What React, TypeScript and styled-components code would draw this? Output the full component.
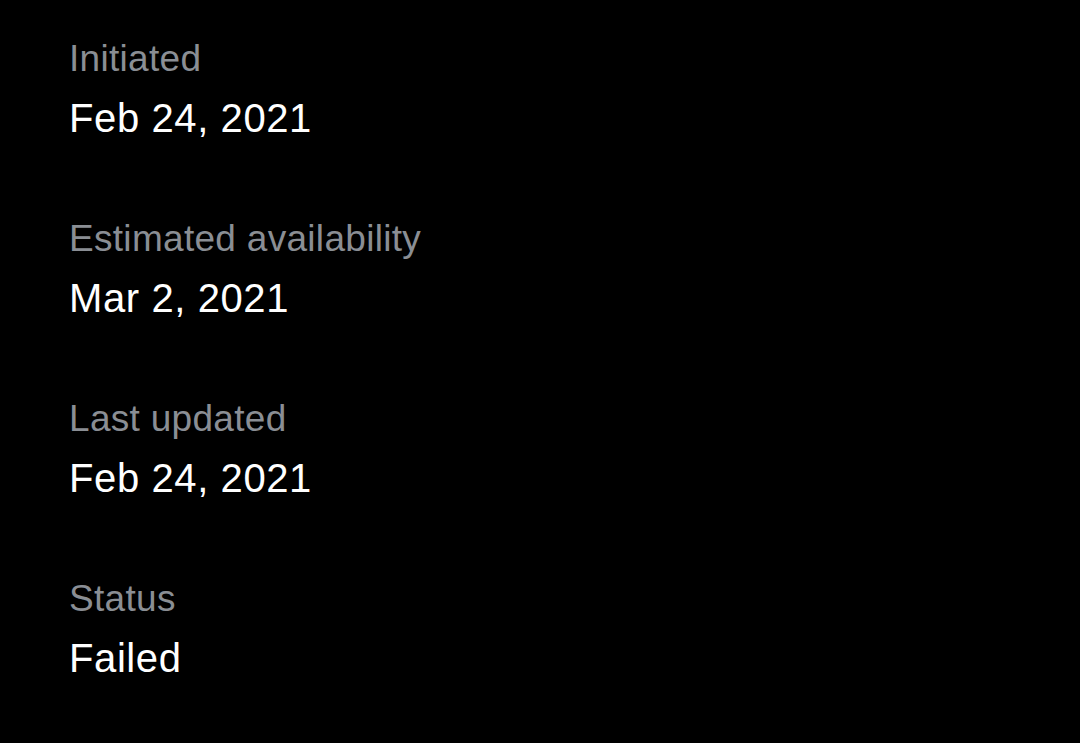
import React from "react";
import styled, { createGlobalStyle } from "styled-components";

const Global = createGlobalStyle`
  html, body { margin: 0; padding: 0; background: #000; }
  body { font-family: "Liberation Sans", Arial, sans-serif; }
`;

const Page = styled.div`
  min-height: 743px;
  background: #000;
  padding: 37px 0 0 69px;
  box-sizing: border-box;
  display: flex;
  flex-direction: column;
  gap: 76px;
`;

const Field = styled.div`
  display: flex;
  flex-direction: column;
  gap: 14px;
`;

const Label = styled.div`
  color: #8a8e94;
  font-size: 37px;
  line-height: 44px;
  letter-spacing: 0.3px;
`;

const Value = styled.div`
  color: #ffffff;
  font-size: 40px;
  line-height: 46px;
  letter-spacing: 0.6px;
`;

const fields = [
  { label: "Initiated", value: "Feb 24, 2021" },
  { label: "Estimated availability", value: "Mar 2, 2021" },
  { label: "Last updated", value: "Feb 24, 2021" },
  { label: "Status", value: "Failed" },
];

export default function App() {
  return (
    <>
      <Global />
      <Page>
        {fields.map((f) => (
          <Field key={f.label}>
            <Label>{f.label}</Label>
            <Value>{f.value}</Value>
          </Field>
        ))}
      </Page>
    </>
  );
}
